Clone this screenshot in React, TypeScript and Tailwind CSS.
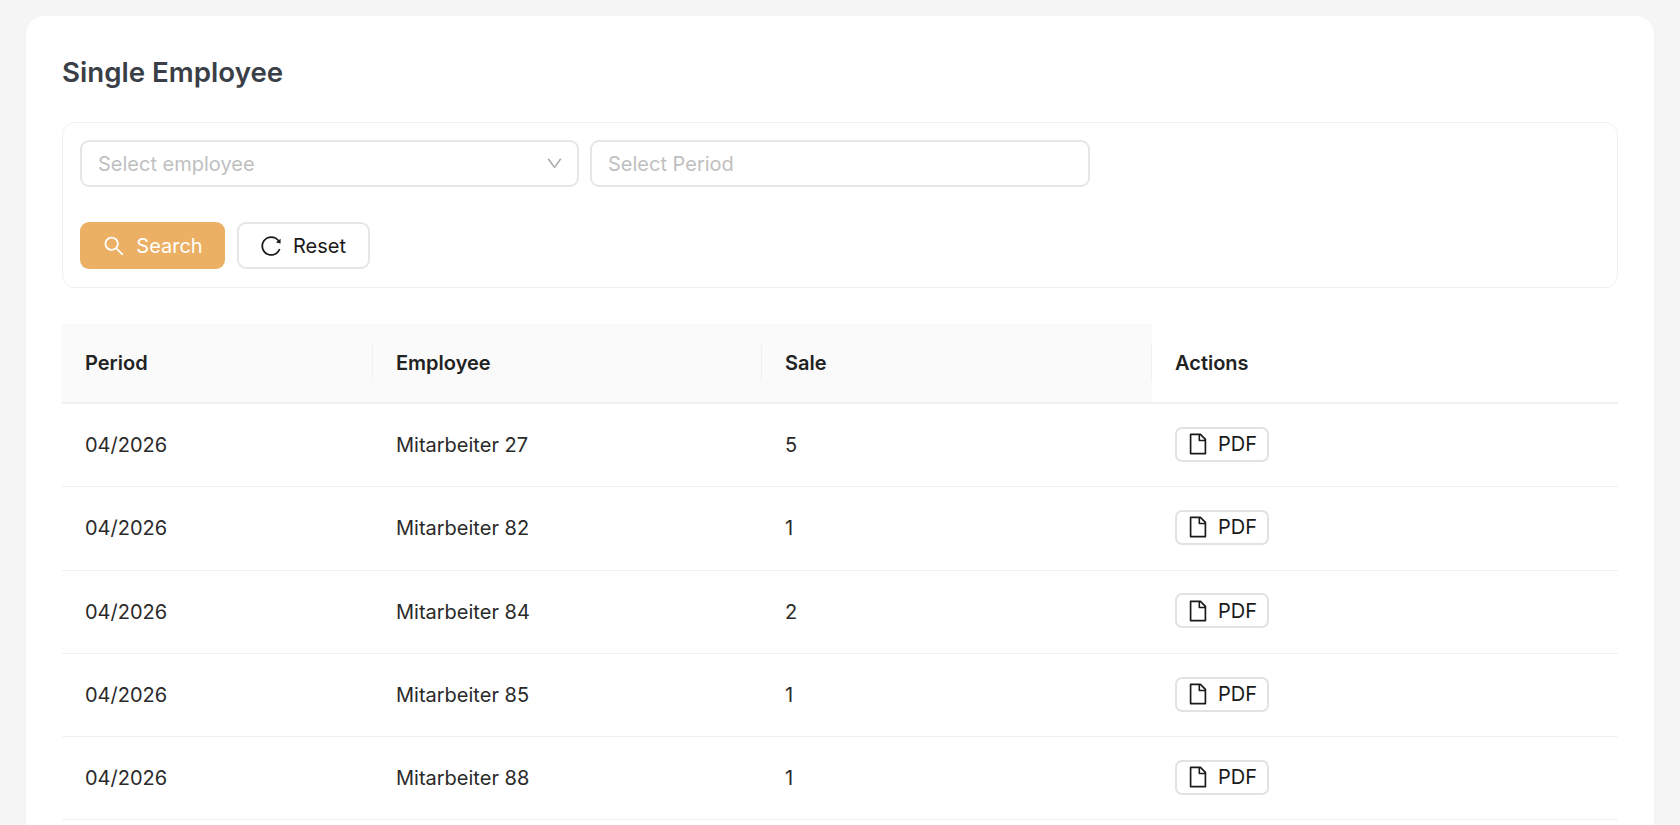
import { AiOutlineDown, AiOutlineFile, AiOutlineReload, AiOutlineSearch } from "react-icons/ai";

const rows = [
  { period: "04/2026", name: "Mitarbeiter 27", sale: "5" },
  { period: "04/2026", name: "Mitarbeiter 82", sale: "1" },
  { period: "04/2026", name: "Mitarbeiter 84", sale: "2" },
  { period: "04/2026", name: "Mitarbeiter 85", sale: "1" },
  { period: "04/2026", name: "Mitarbeiter 88", sale: "1" },
];

function HeadCell({ label, divider, shaded }: { label: string; divider?: boolean; shaded?: boolean }) {
  return (
    <div className={`relative flex items-center pl-[23px] pr-6 ${shaded ? "bg-[#fafafa]" : "bg-white"}`}>
      <span>{label}</span>
      {divider && <span className="absolute right-0 top-1/2 h-[37px] w-px -translate-y-1/2 bg-[#f0f0f0]" />}
    </div>
  );
}

export default function App() {
  return (
    <div className="h-[825px] overflow-hidden bg-[#f5f5f5] pl-[26px] pr-[26px] pt-4 font-['Inter',sans-serif]">
      <div className="min-h-[900px] rounded-[18px] bg-white px-9 pt-[39px]">
        <h1 className="h-[35px] text-[27.7px] font-semibold leading-[35px] text-[#3a3f47]">Single Employee</h1>
        <div className="mt-[32px] h-[166px] rounded-[13px] border border-[#f0f0f0] px-[17px] pt-[17px]">
          <div className="flex gap-[11px]">
            <div className="flex h-[47px] w-[499px] items-center justify-between rounded-[9px] border-2 border-[#e6e6e6] pl-[16px] pr-[13px] text-[20px] text-[#bfbfbf]">
              <span>Select employee</span>
              <AiOutlineDown className="h-[19px] w-[19px] text-[#a8a8a8]" />
            </div>
            <div className="flex h-[47px] w-[500px] items-center rounded-[9px] border-2 border-[#e6e6e6] pl-[16px] text-[20px] text-[#bfbfbf]">
              Select Period
            </div>
          </div>
          <div className="mt-[35px] flex gap-3">
            <button className="flex h-[47px] w-[145px] items-center justify-center gap-[10px] rounded-[9px] bg-[#ebb063] text-[20px] text-white">
              <AiOutlineSearch className="h-[24px] w-[24px]" />
              Search
            </button>
            <button className="flex h-[47px] w-[133px] items-center justify-center gap-[10px] rounded-[9px] border-2 border-[#e6e6e6] pr-[2px] text-[20px] text-[#1a1a1a]">
              <AiOutlineReload className="h-[24px] w-[24px]" />
              Reset
            </button>
          </div>
        </div>
        <div className="mt-9">
          <div className="grid h-[80px] grid-cols-[311px_389px_390px_1fr] border-b-2 border-[#f0f0f0] text-[20px] font-semibold text-[#222222]">
            <HeadCell label="Period" divider shaded />
            <HeadCell label="Employee" divider shaded />
            <HeadCell label="Sale" divider shaded />
            <HeadCell label="Actions" />
          </div>
          {rows.map((r) => (
            <div
              key={r.name}
              className="grid h-[83.3px] grid-cols-[311px_389px_390px_1fr] items-center border-b border-[#f0f0f0] text-[20px] text-[#2a2a2a]"
            >
              <div className="pl-[23px] pr-6">{r.period}</div>
              <div className="pl-[23px] pr-6">{r.name}</div>
              <div className="pl-[23px] pr-6">{r.sale}</div>
              <div className="pl-[23px] pr-6">
                <button className="mb-[2px] flex h-[35px] w-[94px] items-center gap-[8px] rounded-[7px] border-2 border-[#e2e2e2] pl-[9px] text-[20px] text-[#1a1a1a]">
                  <AiOutlineFile className="h-[24px] w-[24px]" />
                  PDF
                </button>
              </div>
            </div>
          ))}
        </div>
      </div>
    </div>
  );
}
